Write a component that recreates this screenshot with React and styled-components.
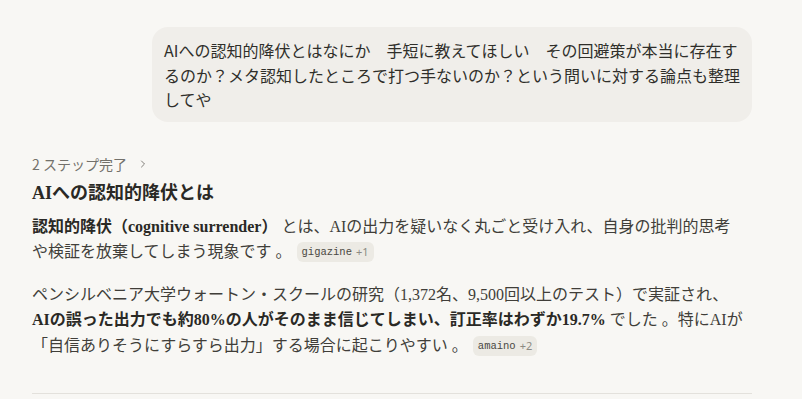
import React from "react";
import styled, { createGlobalStyle } from "styled-components";

const Global = createGlobalStyle`
  html, body { margin: 0; padding: 0; background: #f8f7f4; }
  body { font-family: "Noto Sans CJK JP", "Noto Sans", sans-serif; overflow: hidden; }
`;

const Page = styled.div`
  width: 802px;
  height: 399px;
  background: #f8f7f4;
  padding: 27px 50px 0 32px;
  box-sizing: border-box;
`;

const Column = styled.div`
  width: 720px;
  display: flex;
  flex-direction: column;
`;

const UserRow = styled.div`
  display: flex;
  justify-content: flex-end;
`;

const Bubble = styled.div`
  width: 600px;
  box-sizing: border-box;
  background: #f0eeea;
  border-radius: 16px;
  padding: 11px 10px 10px 12px;
  font-family: "Noto Sans CJK JP", "Noto Sans", sans-serif;
  font-size: 16px;
  line-height: 24.5px;
  color: #2f2e2a;
`;

const Steps = styled.div`
  margin-top: 32px;
  display: flex;
  align-items: center;
  gap: 10px;
  font-family: "Noto Sans CJK JP", "Noto Sans", sans-serif;
  font-size: 14px;
  line-height: 20px;
  color: #73716b;
`;

const Heading = styled.h2`
  margin: 5px 0 0;
  font-family: "Liberation Serif", "Noto Sans CJK JP", serif;
  font-weight: 700;
  font-size: 18px;
  line-height: 28px;
  color: #2a2925;
`;

const Para = styled.p`
  margin: ${(p) => (p.$first ? "7px" : "17px")} 0 0;
  font-family: "Liberation Serif", "Noto Sans CJK JP", serif;
  font-size: 16px;
  line-height: 25.5px;
  color: #403e39;
  font-weight: 400;
`;

const Strong = styled.strong`
  font-weight: 700;
  color: #2a2925;
`;

const Cite = styled.span`
  display: inline-flex;
  align-items: center;
  gap: 4px;
  height: 20px;
  padding: 0 5px;
  margin-left: 5px;
  border-radius: 6px;
  background: #eceae4;
  font-family: "Liberation Mono", "DejaVu Sans Mono", monospace;
  font-size: 10.5px;
  color: #4a4843;
  vertical-align: 2px;
  line-height: 20px;
`;

const CiteCount = styled.span`
  font-family: "Noto Sans", sans-serif;
  color: #8c8a83;
  font-size: 11px;
`;

const Divider = styled.hr`
  margin: 35px 0 0;
  border: none;
  border-top: 1px solid #e3e1dc;
  width: 720px;
`;

const Chevron = () => (
  <svg width="12" height="12" viewBox="0 0 24 24" fill="none" stroke="#73716b" strokeWidth="1.8" strokeLinecap="round" strokeLinejoin="round">
    <path d="M9 6l6 6-6 6" />
  </svg>
);

export default function App() {
  return (
    <>
      <Global />
      <Page>
        <Column>
          <UserRow>
            <Bubble>
              AIへの認知的降伏とはなにか　手短に教えてほしい　その回避策が本当に存在するのか？メタ認知したところで打つ手ないのか？という問いに対する論点も整理してや
            </Bubble>
          </UserRow>
          <Steps>
            <span>2 ステップ完了</span>
            <Chevron />
          </Steps>
          <Heading>AIへの認知的降伏とは</Heading>
          <Para $first>
            <Strong>認知的降伏（cognitive surrender）</Strong> とは、AIの出力を疑いなく丸ごと受け入れ、自身の批判的思考<br />や検証を放棄してしまう現象です 。
            <Cite>gigazine<CiteCount>+1</CiteCount></Cite>
          </Para>
          <Para>
            ペンシルベニア大学ウォートン・スクールの研究（1,372名、9,500回以上のテスト）で実証され、<br />
            <Strong>AIの誤った出力でも約80%の人がそのまま信じてしまい、訂正率はわずか19.7%</Strong> でした 。特にAIが「自信ありそうにすらすら出力」する場合に起こりやすい 。
            <Cite>amaino<CiteCount>+2</CiteCount></Cite>
          </Para>
          <Divider />
        </Column>
      </Page>
    </>
  );
}
